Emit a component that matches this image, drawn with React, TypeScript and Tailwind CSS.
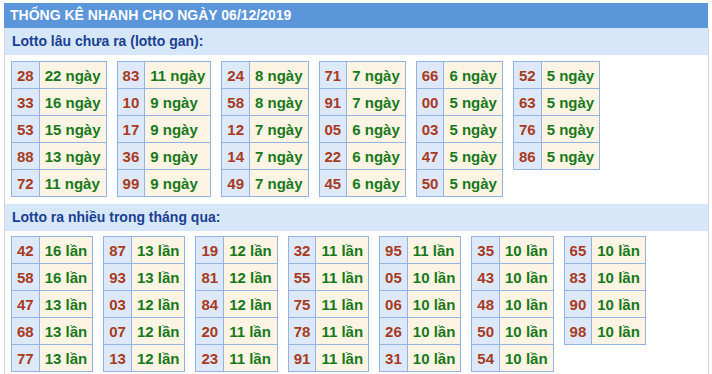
const gan: [string, string][][] = [
  [["28", "22"], ["33", "16"], ["53", "15"], ["88", "13"], ["72", "11"]],
  [["83", "11"], ["10", "9"], ["17", "9"], ["36", "9"], ["99", "9"]],
  [["24", "8"], ["58", "8"], ["12", "7"], ["14", "7"], ["49", "7"]],
  [["71", "7"], ["91", "7"], ["05", "6"], ["22", "6"], ["45", "6"]],
  [["66", "6"], ["00", "5"], ["03", "5"], ["47", "5"], ["50", "5"]],
  [["52", "5"], ["63", "5"], ["76", "5"], ["86", "5"]],
];

const nhieu: [string, string][][] = [
  [["42", "16"], ["58", "16"], ["47", "13"], ["68", "13"], ["77", "13"]],
  [["87", "13"], ["93", "13"], ["03", "12"], ["07", "12"], ["13", "12"]],
  [["19", "12"], ["81", "12"], ["84", "12"], ["20", "11"], ["23", "11"]],
  [["32", "11"], ["55", "11"], ["75", "11"], ["78", "11"], ["91", "11"]],
  [["95", "11"], ["05", "10"], ["06", "10"], ["26", "10"], ["31", "10"]],
  [["35", "10"], ["43", "10"], ["48", "10"], ["50", "10"], ["54", "10"]],
  [["65", "10"], ["83", "10"], ["90", "10"], ["98", "10"]],
];

function StatTable({ rows, unit }: { rows: [string, string][]; unit: string }) {
  return (
    <table className="border-collapse self-start text-[15px] font-bold leading-[17px]">
      <tbody>
        {rows.map(([num, count]) => (
          <tr key={num}>
            <td className="h-[27px] border border-[#93b3e3] bg-[#dde9f9] px-[5px] text-center text-[#a83a23]">
              {num}
            </td>
            <td className="h-[27px] border border-[#93b3e3] bg-[#fdf4e4] px-[5px] text-left text-[#17791a] whitespace-nowrap">
              {count} {unit}
            </td>
          </tr>
        ))}
      </tbody>
    </table>
  );
}

function Section({ title, tables, unit, top }: { title: string; tables: [string, string][][]; unit: string; top: string }) {
  return (
    <div>
      <div className="flex h-[27px] items-center bg-[#d6e7fa] pl-[7px] text-[14px] font-bold text-[#1b3f91]">
        {title}
      </div>
      <div className={`flex gap-[10px] pl-[6px] pb-[7px] ${top}`}>
        {tables.map((t, i) => (
          <StatTable key={i} rows={t} unit={unit} />
        ))}
      </div>
    </div>
  );
}

export default function App() {
  return (
    <div className="h-[374px] w-[712px] overflow-hidden bg-white pt-[3px] font-['Liberation_Sans',Arial,sans-serif]">
      <div className="ml-[4px] flex h-[25px] w-[704px] items-center bg-[#5b95da] pl-[6px] text-[14px] font-bold text-white">
        THỐNG KÊ NHANH CHO NGÀY 06/12/2019
      </div>
      <div className="ml-[4px] w-[705px] border-x border-[#d4d4d4]">
        <Section title="Lotto lâu chưa ra (lotto gan):" tables={gan} unit="ngày" top="pt-[6px]" />
        <Section title="Lotto ra nhiều trong tháng qua:" tables={nhieu} unit="lần" top="pt-[5px]" />
      </div>
    </div>
  );
}
